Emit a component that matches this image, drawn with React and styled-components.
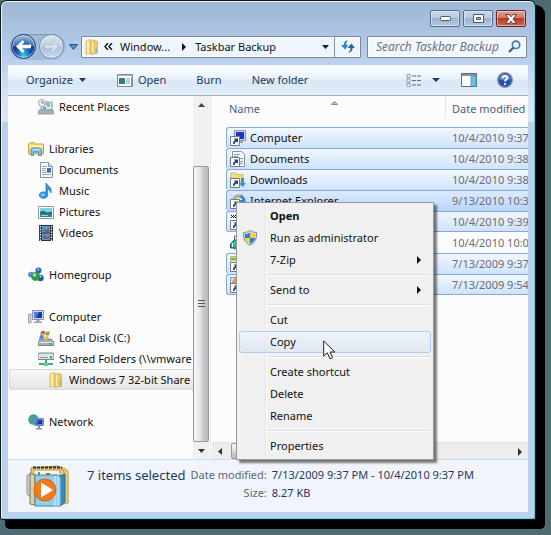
import React from "react";
import styled, { createGlobalStyle, css } from "styled-components";

const GlobalStyle = createGlobalStyle`
  * { box-sizing: border-box; }
  html, body { margin: 0; min-height: 100%; background: #4f6b72; }
  body, button, input, table {
    font-family: "Noto Sans", "Open Sans", sans-serif;
    font-size: 11px;
    line-height: 16px;
    color: #111;
  }
  button { padding: 0; border: 0; background: none; }
  a { color: inherit; text-decoration: none; }
  svg { display: block; flex: none; }
`;

/* ---------- window frame ---------- */
const Window = styled.main`
  display: flex;
  flex-direction: column;
  min-height: calc(100vh - 17px);
  margin: 1px 16px 16px 1px;
  padding: 0 6px 6px;
  border: 1px solid #e3f4fc;
  border-right-color: #6fc9e4;
  border-bottom-color: #6fc9e4;
  border-radius: 6px 6px 2px 2px;
  background: linear-gradient(#9db7d5 0, #a9c2df 24px, #bad0ec 60px, #d3e2f5 92px, #dbe8f8 119px, #b9d1ea 120px);
  box-shadow: 0 0 0 1px #14181c, 7px 7px 0 3px #000;
`;

const TitleBar = styled.header`
  display: flex;
  justify-content: flex-end;
  gap: 3px;
  height: 32px;
  padding: 8px 2px 7px 0;
`;

const CaptionButton = styled.button`
  display: flex;
  align-items: center;
  justify-content: center;
  width: 30px;
  height: 17px;
  border: 1px solid ${(p) => (p.$close ? "#63242a" : "#596d8a")};
  border-radius: 2px;
  background: ${(p) =>
    p.$close
      ? "linear-gradient(#dfa197 0, #d07564 48%, #b93a25 50%, #cf6b50 100%)"
      : "linear-gradient(#c5d6ea 0, #b6cae2 48%, #9bb3cf 50%, #b3c9e3 100%)"};
  box-shadow: inset 0 0 0 1px rgba(255, 255, 255, 0.45);
`;

const NavRow = styled.div`
  display: flex;
  align-items: center;
  height: 31px;
  padding: 1px 1px 7px 0;
`;

const NavPair = styled.div`
  display: flex;
  gap: 3px;
  height: 26px;
  margin-left: 2px;
  padding: 0 1px;
  align-items: center;
  border-radius: 13px;
  background: #a4bad5;
  box-shadow: inset 0 1px 1px #7d94b0;
`;

const RoundButton = styled.button`
  display: flex;
  align-items: center;
  justify-content: center;
  width: 25px;
  height: 25px;
  border: 1px solid ${(p) => (p.$active ? "#1f3f73" : "#7790ae")};
  border-radius: 50%;
  background: ${(p) =>
    p.$active
      ? "radial-gradient(ellipse at 50% 100%, #52d0f5 0, #1565b8 40%, transparent 62%), linear-gradient(#9fb9dd 0, #4674b8 46%, #08348a 52%, #0d4da6 100%)"
      : "linear-gradient(#d5e0ee 0, #c4d3e6 48%, #a9bfd9 52%, #cbdcf0 100%)"};
  box-shadow: inset 0 0 0 1px rgba(255, 255, 255, 0.5);
`;

const DropButton = styled.button`
  display: flex;
  align-items: center;
  justify-content: center;
  width: 16px;
  height: 20px;
`;

const AddressBar = styled.div`
  display: flex;
  flex: 1;
  height: 22px;
  min-width: 0;
  border: 1px solid #77889f;
  border-radius: 1px;
  background: #eff5fc;
  box-shadow: inset 0 0 0 1px #fafcff;
`;

const Crumbs = styled.nav`
  display: flex;
  flex: 1;
  align-items: center;
  min-width: 0;
  padding-left: 2px;
  overflow: hidden;
  white-space: nowrap;
`;

const Crumb = styled.a`
  margin-left: ${(p) => p.$gap}px;
`;

const CrumbArrow = styled.button`
  display: flex;
  margin-left: ${(p) => p.$gap}px;
`;

const AddressButton = styled.button`
  display: flex;
  align-items: center;
  justify-content: center;
  width: ${(p) => (p.$ruled ? 26 : 18)}px;
  border-left: ${(p) => (p.$ruled ? "1px solid #8696ab" : "0")};
`;

const SearchBox = styled.label`
  display: flex;
  align-items: center;
  width: 160px;
  height: 22px;
  margin-left: 6px;
  padding: 0 5px 0 8px;
  border: 1px solid #77889f;
  border-radius: 1px;
  background: #f2f7fd;
  box-shadow: inset 0 0 0 1px #fafcff;
`;

const SearchInput = styled.input`
  flex: 1;
  min-width: 0;
  padding: 0;
  border: 0;
  outline: 0;
  background: none;
  font-size: 12px;
  &::placeholder { color: #6d747d; font-style: italic; opacity: 1; }
`;

/* ---------- client area ---------- */
const Client = styled.div`
  display: flex;
  flex: 1;
  flex-direction: column;
  background: #fcfcfc;
`;

const Toolbar = styled.div`
  display: flex;
  align-items: center;
  height: 31px;
  padding: 0 15px 0 18px;
  border-bottom: 1px solid #a0afc3;
  background: linear-gradient(#fbfdff 0, #eaf2fb 46%, #dbe7f5 50%, #dfeaf7 88%, #e8f1fa 100%);
`;

const ToolButton = styled.button`
  display: flex;
  align-items: center;
  gap: ${(p) => p.$gap || 0}px;
  margin-left: ${(p) => p.$before || 0}px;
  color: #1e395b;
  white-space: nowrap;
`;

const Spacer = styled.span`
  flex: 1;
`;

const Body = styled.div`
  position: relative;
  display: flex;
  flex: 1;
  min-height: 363px;
`;

const Sidebar = styled.nav`
  width: 185px;
  overflow: hidden;
`;

const TreeItem = styled.a`
  display: flex;
  align-items: center;
  gap: 5px;
  height: 21px;
  margin: ${(p) => (p.$group ? 21 : 0)}px 0 0 1px;
  padding-left: ${(p) => [19, 29, 39][p.$level]}px;
  white-space: nowrap;
  ${(p) =>
    p.$selected &&
    css`
      border: 1px solid #d9d9d9;
      border-right: 0;
      border-radius: 3px 0 0 3px;
      background: linear-gradient(#f7f7f7, #e5e5e5);
      padding-left: 38px;
    `}
`;

const VScroll = styled.div`
  display: flex;
  flex-direction: column;
  width: 16px;
  background: #f0f0f0;
`;

const HScroll = styled.div`
  display: flex;
  height: 17px;
  background: #ededed;
  border-top: 1px solid #e1e1e1;
`;

const ScrollButton = styled.button`
  display: flex;
  align-items: center;
  justify-content: center;
  width: 16px;
  height: 17px;
`;

const VThumb = styled.div`
  display: flex;
  flex: 1;
  align-items: center;
  justify-content: center;
  margin-top: 53px;
  border: 1px solid #989898;
  border-radius: 2px;
  background: linear-gradient(90deg, #f7f7f7 0, #e6e6e8 45%, #cdced1 60%, #b9babd 100%);
`;

const HThumb = styled.div`
  width: 180px;
  margin-left: 3px;
  border: 1px solid #989898;
  border-radius: 2px;
  background: linear-gradient(#f7f7f7 0, #e6e6e8 45%, #cdced1 60%, #c0c1c4 100%);
`;

const FilePane = styled.section`
  display: flex;
  flex: 1;
  flex-direction: column;
  min-width: 0;
  margin-left: 1px;
  border-left: 1px solid #dfe7f3;
  padding-left: 1px;
`;

const FileScroller = styled.div`
  flex: 1;
  overflow: hidden;
  padding-left: 14px;
`;

const FileTable = styled.table`
  width: 379px;
  table-layout: fixed;
  border-collapse: separate;
  border-spacing: 0;
`;

const HeadCell = styled.th`
  width: ${(p) => p.$width}px;
  height: 31px;
  padding: 0 0 5px ${(p) => (p.$ruled ? 7 : 3)}px;
  color: #4c607a;
  font-weight: 400;
  text-align: left;
  vertical-align: middle;
  background: ${(p) =>
    p.$ruled ? "linear-gradient(#e3e8ee, #e3e8ee) left top / 1px 22px no-repeat" : "none"};
`;

const SortMark = styled.span`
  float: right;
  width: 114px;
  height: 4px;
`;

const FileRow = styled.tr`
  ${(p) =>
    p.$selected &&
    css`
      & > td {
        border-top: 1px solid #84aadb;
        background: ${p.$focused
          ? "linear-gradient(#dceaff, #b9d5fb)"
          : "linear-gradient(#f1f7ff 0, #cfe2fd 100%)"};
      }
      & > td:first-child {
        border-left: 1px solid #84aadb;
        border-radius: 3px 0 0 3px;
      }
    `}
  ${(p) => p.$last && css`& > td { border-bottom: 1px solid #84aadb; }`}
`;

const Cell = styled.td`
  height: 21px;
  padding: 0 0 0 ${(p) => (p.$date ? 7 : 3)}px;
  color: ${(p) => (p.$date ? "#6d6d6d" : "#111")};
  white-space: nowrap;
  border-left: ${(p) => (p.$date ? "0" : "1px solid transparent")};
`;

const FileName = styled.span`
  display: flex;
  align-items: center;
  gap: 4px;
  height: 18px;
`;

/* ---------- context menu ---------- */
const Menu = styled.div`
  position: absolute;
  left: 228px;
  top: 106px;
  width: 198px;
  padding: 2px;
  border: 1px solid #979797;
  background: linear-gradient(90deg, transparent 28px, #e2e3e3 28px, #e2e3e3 29px, #fff 29px, #fff 30px, transparent 30px), #f0f0f0;
  background-clip: padding-box;
  box-shadow: 3px 3px 2px rgba(0, 0, 0, 0.5);
`;

const MenuItem = styled.button`
  display: flex;
  align-items: center;
  width: 100%;
  height: 22px;
  padding-right: 9px;
  border: 1px solid transparent;
  border-radius: 3px;
  font-weight: ${(p) => (p.$bold ? 700 : 400)};
  text-align: left;
  white-space: nowrap;
  ${(p) =>
    p.$hover &&
    css`
      border-color: #aeccf0;
      background: linear-gradient(rgba(240, 244, 250, 0.8), rgba(219, 229, 242, 0.8));
    `}
`;

const MenuIcon = styled.span`
  width: 30px;
  padding-left: 2px;
`;

const MenuText = styled.span`
  flex: 1;
`;

const MenuRule = styled.hr`
  height: 2px;
  margin: 3px 0 3px 28px;
  border: 0;
  border-top: 1px solid #dedede;
  border-bottom: 1px solid #fff;
`;

const Pointer = styled.svg`
  position: absolute;
  left: 315px;
  top: 244px;
`;

/* ---------- details pane ---------- */
const Details = styled.footer`
  display: flex;
  height: 53px;
  padding: 4px 0 0 18px;
  border-top: 1px solid #cfd9e8;
  background: #f1f5fb;
`;

const Facts = styled.dl`
  display: grid;
  grid-template-columns: auto auto 1fr;
  grid-auto-rows: 18px;
  column-gap: 5px;
  align-content: start;
  margin: 2px 0 0 17px;
  white-space: nowrap;
`;

const Count = styled.div`
  grid-row: span 2;
  font-size: 13px;
  line-height: 18px;
  color: #1e395b;
`;

const Fact = styled.div`
  display: contents;
  dt { text-align: right; color: #5a6779; line-height: 18px; }
  dd { margin: 0; color: #1e395b; line-height: 18px; }
`;

/* ---------- drawings ---------- */
const Svg = ({ w = 16, h = 16, children }) => (
  <svg width={w} height={h} viewBox={`0 0 ${w} ${h}`} aria-hidden="true">{children}</svg>
);

const Down = ({ fill = "#1e395b", w = 7, h = 4 }) => (
  <Svg w={w} h={h}><path d={`M0 0H${w}L${w / 2} ${h}Z`} fill={fill} /></Svg>
);
const Up = () => <Svg w={7} h={4}><path d="M0 4H7L3.5 0Z" fill="#444" /></Svg>;
const Right = ({ fill = "#111" }) => <Svg w={4} h={8}><path d="M0 0V8L4 4Z" fill={fill} /></Svg>;
const Left = () => <Svg w={4} h={7}><path d="M4 0V7L0 3.5Z" fill="#333" /></Svg>;

const Folder = () => (
  <Svg>
    <path d="M2 2L7 .5V14L2 15.5Z" fill="#f5dc83" stroke="#d5b14e" strokeWidth=".7" />
    <path d="M7 2.5L10 1.5 13.5 2.5V14L7 15.5Z" fill="#edcc63" stroke="#cfa944" strokeWidth=".7" />
    <path d="M4 2V14.5M8.5 3V14" stroke="#fff3bd" strokeWidth="1.4" />
    <path d="M11.5 9H13.5V14H11.5Z" fill="#a8b9a0" />
  </Svg>
);

const Recent = () => (
  <Svg>
    <path d="M3 3H14V11H3Z" fill="#dfe9ee" stroke="#8d9ba3" />
    <path d="M6 5H12M9 7H12" stroke="#5bafd0" strokeWidth="1.5" />
    <path d="M5 8H8V10H5Z" fill="#4ba4c9" />
    <path d="M1 11H15L16 15H0Z" fill="#abb1b5" stroke="#82898d" strokeWidth=".7" />
    <circle cx="4" cy="4" r="3.5" fill="#eef1f2" stroke="#a1a8ac" />
    <path d="M4 2V4H6" stroke="#6e777c" fill="none" />
  </Svg>
);

const Libraries = () => (
  <Svg>
    <path d="M.5 3L2 1.5H6L7.5 3H15.5V13H.5Z" fill="#f1d778" stroke="#c9a448" />
    <path d="M1 5H15" stroke="#fff3b7" strokeWidth="1.5" />
    <path d="M3 14.5V9L4.5 7H11.5L13.5 9V14.5H10.5V11H5.5V14.5Z" fill="#7ec4e9" stroke="#4a93bc" />
    <path d="M5 8.5H11.5" stroke="#d2effc" />
  </Svg>
);

const DocumentIcon = () => (
  <Svg>
    <path d="M2.5 .5H10.5L14.5 4.5V15.5H2.5Z" fill="#fbfcfd" stroke="#8795a1" />
    <path d="M10.5 .5V4.5H14.5" fill="#d7e0e7" stroke="#8795a1" />
    <path d="M4 4.5H9M4 6.5H8M4 8.5H8M4 10.5H13M4 12.5H13" stroke="#92a9bd" />
    <path d="M9 6H13V10H9Z" fill="#3173ae" />
  </Svg>
);

const Music = () => (
  <Svg>
    <path d="M8 0C9 3 14.5 3.5 13 10C12.3 7.2 10.5 6.4 9.7 6.2V12.2A4.2 3.2 0 1 1 8 9.5Z" fill="#309ae3" stroke="#1d6fb6" strokeWidth=".7" />
    <ellipse cx="4.8" cy="11.8" rx="2.2" ry="1.4" fill="#7cc9f7" />
  </Svg>
);

const Picture = () => (
  <Svg>
    <path d="M.5 2.5H15.5V14.5H.5Z" fill="#fff" stroke="#8b98a1" />
    <path d="M2 4H14V13H2Z" fill="#7fd2ef" />
    <path d="M2 8L5 6.5 9 8.5 14 7.5V10H2Z" fill="#28784e" />
    <path d="M2 10H14V13H2Z" fill="#2986a9" />
    <path d="M3 11.5H10" stroke="#8fd8e6" />
  </Svg>
);

const Video = () => (
  <Svg>
    <path d="M1 0H15V16H1Z" fill="#26303a" />
    <path d="M4 1H12V7.5H4ZM4 8.5H12V15H4Z" fill="#4a9fda" />
    <path d="M5 3L8 5 11 2V7H6ZM6 9L9 12 11 10V14H5Z" fill="#8c5a5c" />
    <path d="M2.5 1V16M13.5 1V16" stroke="#f0f4f7" strokeWidth="1.3" strokeDasharray="1.5 1.2" />
  </Svg>
);

const Homegroup = () => (
  <Svg>
    <path d="M4 9L10 4L12 12Z" fill="none" stroke="#7aa7cf" strokeWidth="1.5" />
    <circle cx="10.5" cy="3.5" r="3" fill="#2c67bb" />
    <circle cx="3" cy="7.5" r="2.8" fill="#3f83cc" />
    <circle cx="12.5" cy="11" r="3.2" fill="#235bb0" />
    <circle cx="7.5" cy="9.5" r="4.4" fill="#2f9b47" />
    <circle cx="6.5" cy="8" r="1.8" fill="#a8e29c" />
    <path d="M9.5 2.5H11M2 6.5H3M12 9.5H13.5" stroke="#cde7ff" strokeWidth="1.3" />
  </Svg>
);

const ComputerIcon = () => (
  <Svg>
    <path d="M.5 5H3V14H.5Z" fill="#d2d8dc" stroke="#89939b" strokeWidth=".8" />
    <path d="M4.5 1.5H15.5V10.5H4.5Z" fill="#cdd6e2" stroke="#8993a3" />
    <path d="M6 3H14V9H6Z" fill="#1636bd" />
    <path d="M6 3H11L8 9H6Z" fill="#4f7be2" />
    <path d="M8.5 11H11.5V12.5H14V14H6V12.5H8.5Z" fill="#9ba5b0" />
  </Svg>
);

const Disk = () => (
  <Svg>
    <path d="M2 9H13L16 12V15.5H0V12Z" fill="#a7b0b6" stroke="#6a747b" strokeWidth=".8" />
    <path d="M1 12.5H15" stroke="#e4e9eb" />
    <path d="M11 13H14V14.5H11Z" fill="#36b34a" />
    <path d="M3 1.5Q5.5 0 7.3 1.2L6.4 4.7Q4.5 3.6 2.2 5Z" fill="#e65a2b" />
    <path d="M8 1.5Q10 2.4 12 1L11 5Q9 6 7 5Z" fill="#6fb43c" />
    <path d="M2 5.6Q4.2 4.5 6.1 5.6L5.2 9Q3.4 8 1.2 9.2Z" fill="#3a8bd8" />
    <path d="M6.9 5.9Q8.8 6.7 10.8 5.8L9.8 9.5Q7.9 10.3 6 9.2Z" fill="#f2bf2f" />
  </Svg>
);

const NetDrive = () => (
  <Svg>
    <path d="M1 2H15L16 4V8.5H0V4Z" fill="#e0e4e6" stroke="#6d777d" strokeWidth=".9" />
    <path d="M2 6.5H10" stroke="#8d979d" />
    <path d="M12 5H14V7.5H12Z" fill="#35a552" />
    <path d="M7 9H9V12H15V14H1V12H7Z" fill="#3fae83" />
    <path d="M6 11.5H10V15H6Z" fill="#68c9a0" />
  </Svg>
);

const Network = () => (
  <Svg>
    <circle cx="5.5" cy="5.5" r="5.2" fill="#3b9bd4" />
    <path d="M2 2Q5 0 7 1L5 4 2 5 3 8 6 10Q1 11 .5 6Z" fill="#44ad55" />
    <path d="M6.5 4.5H15.5V11.5H6.5Z" fill="#c7d3e3" stroke="#77889f" />
    <path d="M7.5 5.5H14.5V10.5H7.5Z" fill="#1437b8" />
    <path d="M7.5 5.5H11.5L9 10.5H7.5Z" fill="#456fe0" />
    <path d="M10 12H12V14H14V15.5H8V14H10Z" fill="#8795a8" />
  </Svg>
);

const shortcutArt = {
  computer: (
    <g>
      <path d="M4.5 .5H15.5V10.5H4.5Z" fill="#cdd6e2" stroke="#8993a3" />
      <path d="M6 2H14V9H6Z" fill="#1636bd" />
      <path d="M10 11H13V13H10Z" fill="#9ba5b0" />
    </g>
  ),
  document: (
    <g>
      <path d="M2.5 .5H11.5L14.5 3.5V15.5H2.5Z" fill="#fbfcfd" stroke="#8795a1" />
      <path d="M4 3.5H10M4 5.5H8M10 7.5H13M10 10.5H13M10 12.5H13" stroke="#7898b5" />
    </g>
  ),
  downloads: (
    <g>
      <path d="M1 1H6L7 2.5H13V13H1Z" fill="#f1dc84" stroke="#c9a850" strokeWidth=".7" />
      <path d="M11 6H14V11H16L12.5 15 9 11H11Z" fill="#2f94dd" />
    </g>
  ),
  explorer: (
    <g>
      <circle cx="9" cy="8" r="5" fill="#d6edfb" stroke="#2d8ad0" strokeWidth="3" />
      <path d="M5 8H14" stroke="#2d8ad0" strokeWidth="2" />
      <path d="M2 10Q3 1 15 1Q9 2 2 10Z" fill="#efbd3a" />
    </g>
  ),
  checker: (
    <g>
      <path d="M1 1H14V14H1Z" fill="#fff" />
      <path d="M1 1.5H14M1 3.5H14" stroke="#111" strokeDasharray="1 1" />
      <path d="M2 2.5H14" stroke="#111" strokeDasharray="1 1" />
    </g>
  ),
  green: (
    <g>
      <path d="M.5 .5H13V13H.5Z" fill="#edf0bd" stroke="#b5bf8a" />
      <path d="M1 3H12" stroke="#8fbb3c" strokeWidth="3" />
    </g>
  ),
  orange: (
    <g>
      <path d="M.5 .5H13V13H.5Z" fill="#cfe6f7" stroke="#6e9cca" />
      <circle cx="7" cy="6" r="5" fill="#f08c42" />
    </g>
  ),
};

const Shortcut = ({ kind }) =>
  kind === "teal" ? (
    <Svg>
      <path d="M4.5 1H14V14H4.5Z" fill="#fff" stroke="#666" />
      <path d="M.5 9L4.5 4.5 7 6V13H.5Z" fill="#27b9ac" stroke="#0c5551" />
      <path d="M2.5 8V12" stroke="#fff" />
    </Svg>
  ) : (
    <Svg>
      {shortcutArt[kind]}
      <path d="M.5 6.5H9.5V15.5H.5Z" fill="#fff" stroke="#76797c" />
      <path d="M3 14Q2.5 11.5 5 10L3.8 8.5H8V12.8L6.7 11.5Q4.5 12 4.5 14Z" fill="#15439b" />
    </Svg>
  );

const Shield = () => (
  <Svg>
    <path d="M8 .5Q10.5 2.5 14.5 2.5Q15.5 11.5 8 15.5Q.5 11.5 1.5 2.5Q5.5 2.5 8 .5Z" fill="#d9dee3" stroke="#868e96" />
    <path d="M8 2.5V8H2.8Q2.6 6 3 4Q6 4 8 2.5Z" fill="#2f7fd0" />
    <path d="M8 2.5V8H13.2Q13.4 6 13 4Q10 4 8 2.5Z" fill="#f5cd3c" />
    <path d="M8 8H2.8Q3.8 12 8 14Z" fill="#f5cd3c" />
    <path d="M8 8H13.2Q12.2 12 8 14Z" fill="#2f7fd0" />
  </Svg>
);

const MediaStack = () => (
  <Svg w={44} h={44}>
    <path d="M1 11H9V32H3L1 30Z" fill="#c4d2db" stroke="#8999a5" />
    <path d="M29 4H38L42 7V39L34 41Z" fill="#f0d173" stroke="#b99543" />
    <path d="M5 4L32 2 38 7V39H5Z" fill="#ebce77" stroke="#a88a46" />
    <path d="M7 3.5H36" stroke="#302e2a" strokeWidth="2" strokeDasharray="3 1" />
    <path d="M8 6H34V14H8Z" fill="#f8f3df" stroke="#877b5c" strokeWidth=".7" />
    <path d="M12 8H14V11H12Z" fill="#5da545" />
    <path d="M20 9H24V12H20Z" fill="#d85c33" />
    <path d="M4 9V40L9 41V11Z" fill="#e2cf91" stroke="#5f6055" strokeWidth=".8" />
    <path d="M34 12L39 10V38L34 42Z" fill="#368abe" stroke="#2a6a95" />
    <path d="M9 11H32L35 14V42H9Z" fill="#94cfea" stroke="#3d86b1" />
    <path d="M29 12V42M32 12V42" stroke="#cbecf8" />
    <circle cx="19" cy="26" r="11" fill="#f07c22" stroke="#db6417" />
    <path d="M15 18.5L27 26 15 33.5Z" fill="#fff" />
  </Svg>
);

const tree = [
  { label: "Recent Places", level: 1, Icon: Recent },
  { label: "Libraries", level: 0, Icon: Libraries, group: true },
  { label: "Documents", level: 1, Icon: DocumentIcon },
  { label: "Music", level: 1, Icon: Music },
  { label: "Pictures", level: 1, Icon: Picture },
  { label: "Videos", level: 1, Icon: Video },
  { label: "Homegroup", level: 0, Icon: Homegroup, group: true },
  { label: "Computer", level: 0, Icon: ComputerIcon, group: true },
  { label: "Local Disk (C:)", level: 1, Icon: Disk },
  { label: "Shared Folders (\\\\vmware", level: 1, Icon: NetDrive },
  { label: "Windows 7 32-bit Share", level: 2, Icon: Folder, selected: true },
  { label: "Network", level: 0, Icon: Network, group: true },
];

const files = [
  { kind: "computer", name: "Computer", date: "10/4/2010 9:37", selected: true },
  { kind: "document", name: "Documents", date: "10/4/2010 9:38", selected: true },
  { kind: "downloads", name: "Downloads", date: "10/4/2010 9:38", selected: true },
  { kind: "explorer", name: "Internet Explorer", date: "9/13/2010 10:3", selected: true, focused: true },
  { kind: "checker", date: "10/4/2010 9:39", selected: true, last: true },
  { kind: "teal", date: "10/4/2010 10:0" },
  { kind: "green", date: "7/13/2009 9:37", selected: true },
  { kind: "orange", date: "7/13/2009 9:54", selected: true, last: true },
];

const menu = [
  [{ label: "Open", bold: true }, { label: "Run as administrator", Icon: Shield }, { label: "7-Zip", sub: true }],
  [{ label: "Send to", sub: true }],
  [{ label: "Cut" }, { label: "Copy", hover: true }],
  [{ label: "Create shortcut" }, { label: "Delete" }, { label: "Rename" }],
  [{ label: "Properties" }],
];

export default function App() {
  return (
    <>
      <GlobalStyle />
      <Window>
        <TitleBar>
          <CaptionButton aria-label="Minimize">
            <Svg w={11} h={5}><rect x=".5" y=".5" width="10" height="4" rx="1" fill="#fff" stroke="#4e5a6b" /></Svg>
          </CaptionButton>
          <CaptionButton aria-label="Maximize">
            <Svg w={11} h={9}><path fillRule="evenodd" d="M.5 .5H10.5V8.5H.5ZM3.5 3.5V5.5H7.5V3.5Z" fill="#fff" stroke="#4e5a6b" /></Svg>
          </CaptionButton>
          <CaptionButton $close aria-label="Close">
            <Svg w={12} h={10}><path d="M.5 .5H4L6 2.8 8 .5H11.5L8 5 11.5 9.5H8L6 7.2 4 9.5H.5L4 5Z" fill="#fff" stroke="#5c4348" /></Svg>
          </CaptionButton>
        </TitleBar>
        <NavRow>
          <NavPair>
            <RoundButton $active aria-label="Back">
              <Svg w={15} h={13}><path d="M0 6.5L6.5 0 8.5 2 6.2 4.7H15V8.3H6.2L8.5 11 6.5 13Z" fill="#fff" /></Svg>
            </RoundButton>
            <RoundButton aria-label="Forward">
              <Svg w={15} h={13}><path d="M14.5 6.5L8.5 .7 6.5 2.5 8.8 4.7H.5V8.3H8.8L6.5 10.5 8.5 12.3Z" fill="#d6e1ee" stroke="#b0c1d6" /></Svg>
            </RoundButton>
          </NavPair>
          <DropButton aria-label="Recent pages">
            <Svg w={9} h={6}><path d="M.5 .5H8.5L4.5 5.5Z" fill="#4f93cc" stroke="#24538a" /></Svg>
          </DropButton>
          <AddressBar>
            <Crumbs aria-label="Location">
              <Folder />
              <CrumbArrow $gap={4} aria-label="Parent folders">
                <Svg w={9} h={7}><path d="M4 0L1 3.5 4 7M8 0L5 3.5 8 7" fill="none" stroke="#111" strokeWidth="1.4" /></Svg>
              </CrumbArrow>
              <Crumb href="#windows" $gap={7}>Window...</Crumb>
              <CrumbArrow $gap={12} aria-label="Subfolders"><Right /></CrumbArrow>
              <Crumb href="#taskbar" $gap={9}>Taskbar Backup</Crumb>
            </Crumbs>
            <AddressButton aria-label="Previous locations"><Down fill="#111a4c" /></AddressButton>
            <AddressButton $ruled aria-label="Refresh">
              <Svg w={14} h={13}>
                <path d="M7 0Q4 .5 3 3V5H0L4 9.5 7.5 5H5Q5 2 7 0Z" fill="#3a81c5" />
                <path d="M7 13Q11 12 11.5 9V8H14L10.5 3.5 6.5 8H9.5Q9.5 11 7 13Z" fill="#2a66ac" />
              </Svg>
            </AddressButton>
          </AddressBar>
          <SearchBox>
            <SearchInput type="text" placeholder="Search Taskbar Backup" aria-label="Search Taskbar Backup" />
            <Svg w={13} h={13}>
              <circle cx="8" cy="4.8" r="3.7" fill="#eef6fd" stroke="#3b78b7" strokeWidth="1.6" />
              <path d="M5.3 7.7L1 12" stroke="#2c609f" strokeWidth="2.2" />
            </Svg>
          </SearchBox>
        </NavRow>

        <Client>
          <Toolbar>
            <ToolButton $gap={6}>Organize<Down /></ToolButton>
            <ToolButton $before={31} $gap={5}>
              <Svg w={16} h={13}>
                <path d="M.5 .5H15.5V12.5H.5Z" fill="#fff" stroke="#848d93" />
                <path d="M1 1.5H15" stroke="#a9b2b8" />
                <path d="M2 4H8V10H2Z" fill="#347e79" />
                <path d="M9 5H13M9 7H13M9 9H13M14.5 3V12" stroke="#8f999e" />
              </Svg>
              Open
            </ToolButton>
            <ToolButton $before={30}>Burn</ToolButton>
            <ToolButton $before={30}>New folder</ToolButton>
            <Spacer />
            <ToolButton aria-label="Change view">
              <Svg w={16} h={13}>
                <path d="M1 .5H4V3.5H1ZM1 5H4V8H1ZM1 9.5H4V12.5H1Z" fill="#fff" stroke="#768695" strokeWidth=".8" />
                <path d="M6 2H10M11 2H15M6 6.5H10M11 6.5H15M6 11H10M11 11H15" stroke="#5c6d82" />
              </Svg>
            </ToolButton>
            <ToolButton $before={10} aria-label="More view options"><Down w={8} /></ToolButton>
            <ToolButton $before={21} aria-label="Preview pane">
              <Svg w={16} h={14}>
                <path d="M.5 .5H15.5V13.5H.5Z" fill="#fff" stroke="#557080" />
                <path d="M1 2H15" stroke="#557080" strokeWidth="1.5" />
                <path d="M10 3H15V13H10Z" fill="#6fc0d9" stroke="#4797b0" strokeWidth=".8" />
              </Svg>
            </ToolButton>
            <ToolButton $before={20} aria-label="Help">
              <Svg>
                <circle cx="8" cy="8" r="7.4" fill="#2450ae" stroke="#8f9bad" strokeWidth="1.2" />
                <path d="M2.3 7A5.8 5.8 0 0 1 13.7 7Q8 9 2.3 7Z" fill="#6f93d8" />
                <path d="M5.7 6Q5.7 4 8 4T10.3 6C10.3 7.5 8 7.6 8 9.6" fill="none" stroke="#fff" strokeWidth="1.8" />
                <circle cx="8" cy="12" r="1.1" fill="#fff" />
              </Svg>
            </ToolButton>
          </Toolbar>

          <Body>
            <Sidebar aria-label="Folders">
              {tree.map(({ label, level, Icon, group, selected }, i) => (
                <TreeItem key={i} href={`#place-${i}`} $level={level} $group={group} $selected={selected}>
                  <Icon />{label}
                </TreeItem>
              ))}
            </Sidebar>
            <VScroll>
              <ScrollButton aria-label="Scroll up"><Up /></ScrollButton>
              <VThumb>
                <Svg w={7} h={8}><path d="M0 .5H7M0 3.5H7M0 6.5H7" stroke="#555" /></Svg>
              </VThumb>
              <ScrollButton aria-label="Scroll down"><Down fill="#333" /></ScrollButton>
            </VScroll>

            <FilePane>
              <FileScroller>
                <FileTable>
                  <thead>
                    <tr>
                      <HeadCell scope="col" $width={219}>
                        <SortMark><Svg w={7} h={4}><path d="M.5 3.5H6.5L3.5 .5Z" fill="#a9c8d8" stroke="#5c7f93" strokeWidth=".8" /></Svg></SortMark>
                        Name
                      </HeadCell>
                      <HeadCell scope="col" $width={160} $ruled>Date modified</HeadCell>
                    </tr>
                  </thead>
                  <tbody>
                    {files.map((f, i) => (
                      <FileRow key={i} $selected={f.selected} $focused={f.focused} $last={f.last}>
                        <Cell><FileName><Shortcut kind={f.kind} />{f.name}</FileName></Cell>
                        <Cell $date>{f.date}</Cell>
                      </FileRow>
                    ))}
                  </tbody>
                </FileTable>
              </FileScroller>
              <HScroll>
                <ScrollButton aria-label="Scroll left"><Left /></ScrollButton>
                <HThumb />
                <Spacer />
                <ScrollButton aria-label="Scroll right"><Right fill="#333" /></ScrollButton>
              </HScroll>
            </FilePane>

            <Menu role="menu">
              {menu.map((group, g) => (
                <React.Fragment key={g}>
                  {g > 0 && <MenuRule />}
                  {group.map(({ label, bold, Icon, sub, hover }) => (
                    <MenuItem key={label} role="menuitem" $bold={bold} $hover={hover}>
                      <MenuIcon>{Icon && <Icon />}</MenuIcon>
                      <MenuText>{label}</MenuText>
                      {sub && <Right />}
                    </MenuItem>
                  ))}
                </React.Fragment>
              ))}
            </Menu>
            <Pointer width="13" height="20" viewBox="0 0 13 20" aria-hidden="true">
              <path d="M.7 .9V16L4.3 12.8 7 18.8 9.6 17.6 7 12H11.8Z" fill="#fff" stroke="#222" />
            </Pointer>
          </Body>

          <Details>
            <MediaStack />
            <Facts>
              <Count>7 items selected</Count>
              <Fact><dt>Date modified:</dt><dd>7/13/2009 9:37 PM - 10/4/2010 9:37 PM</dd></Fact>
              <Fact><dt>Size:</dt><dd>8.27 KB</dd></Fact>
            </Facts>
          </Details>
        </Client>
      </Window>
    </>
  );
}
